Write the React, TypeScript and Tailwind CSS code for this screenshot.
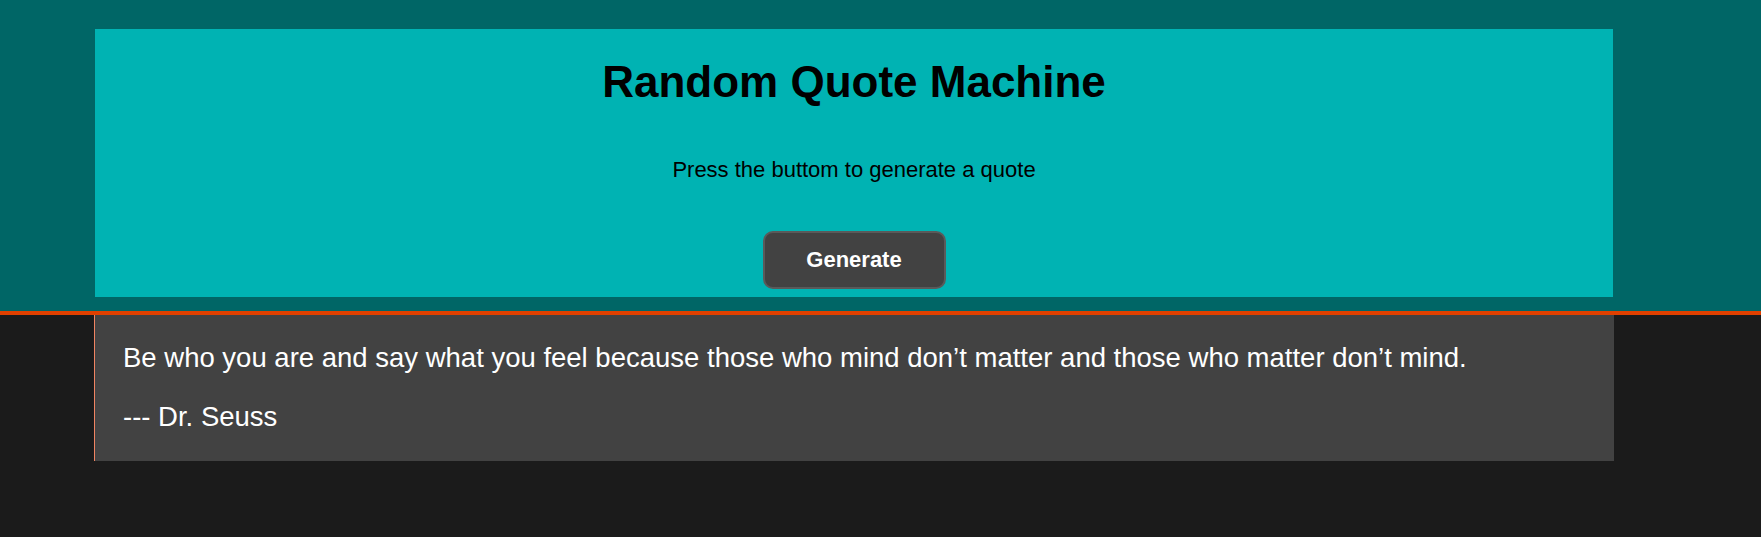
import React from "react";

export default function App() {
  return (
    <div className="min-h-screen bg-[#1b1b1b] font-['Liberation_Sans',Arial,sans-serif]">
      <header className="bg-[#006666] pt-[29px] pb-[14px] border-b-4 border-[#e04000]">
        <div className="ml-[95px] w-[1518px] h-[268px] bg-[#00b3b3] flex flex-col items-center pt-[28px]">
          <h1 className="text-[44px] leading-[50px] font-bold text-black">Random Quote Machine</h1>
          <p className="mt-[50px] text-[22px] leading-[25px] text-black">Press the buttom to generate a quote</p>
          <button className="mt-[49px] w-[183px] h-[58px] rounded-[10px] border-2 border-[#5a5a5a] bg-[#424242] text-white text-[22px] leading-[24px] font-bold pb-[1px]">
            Generate
          </button>
        </div>
      </header>
      <div className="ml-[94px] w-[1520px] bg-[#424242] border-l border-[#f08462] pl-[28px] pt-[27px] pb-[28px] text-white">
        <p className="text-[27.5px] leading-[32px]">
          Be who you are and say what you feel because those who mind don’t matter and those who matter don’t mind.
        </p>
        <p className="mt-[27px] text-[27.5px] leading-[32px]">--- Dr. Seuss</p>
      </div>
    </div>
  );
}
